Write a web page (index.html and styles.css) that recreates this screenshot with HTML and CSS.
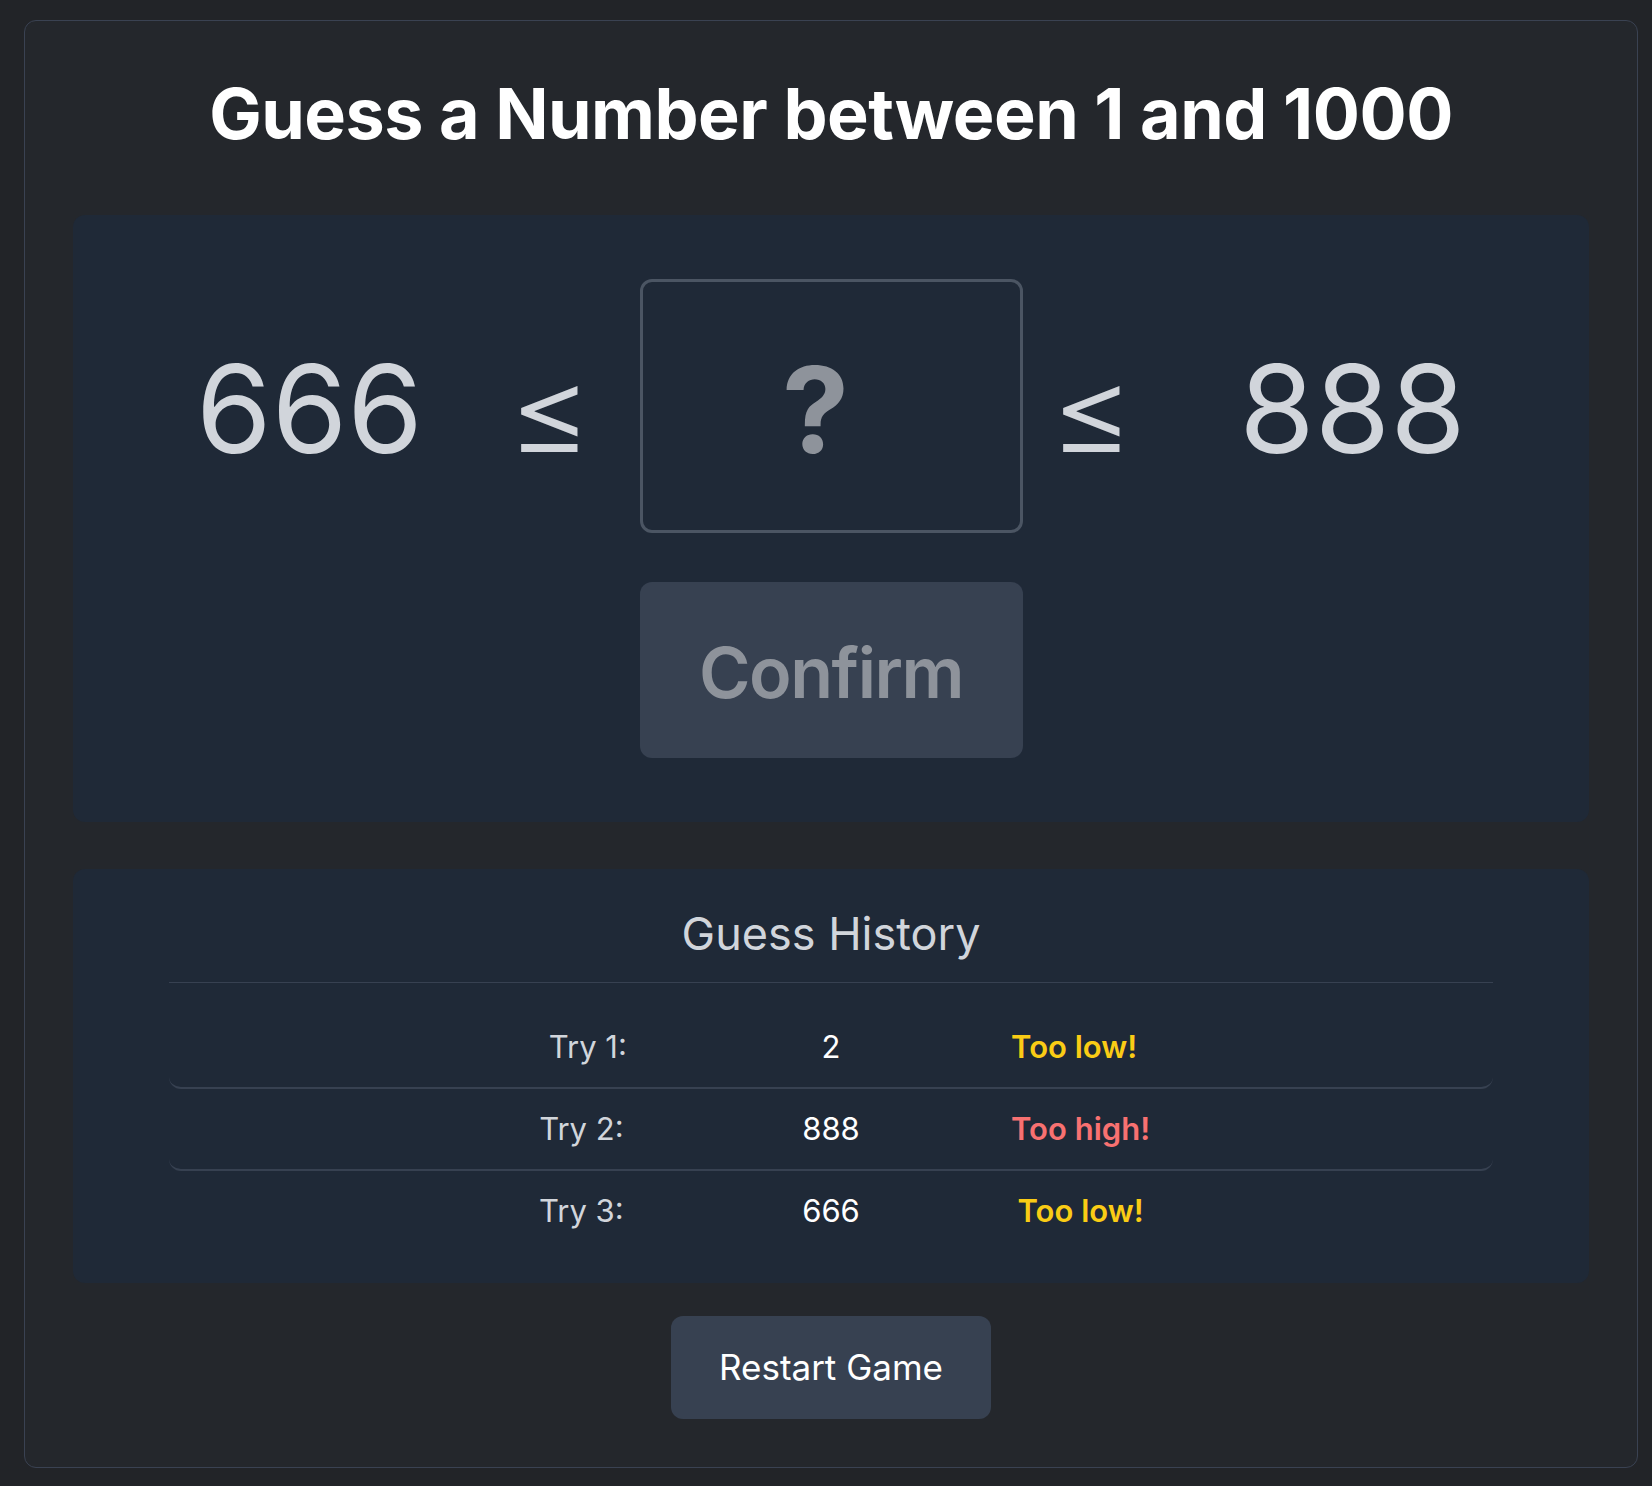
FILE: index.html
```html
<!DOCTYPE html>
<html lang="en">
<head>
<meta charset="utf-8">
<title>Guess a Number</title>
<link rel="stylesheet" href="styles.css">
</head>
<body>
<div class="page">
  <main class="game">
    <h1 class="title">Guess a Number between 1 and 1000</h1>
    <section class="panel play">
      <div class="range">
        <div class="bound">666</div>
        <div class="le">≤</div>
        <input class="guess" type="text" placeholder="?">
        <div class="le">≤</div>
        <div class="bound">888</div>
      </div>
      <button class="confirm" disabled>Confirm</button>
    </section>
    <section class="panel history">
      <h2 class="history-title">Guess History</h2>
      <div class="rows">
        <div class="row">
          <span class="cell label">Try 1:</span>
          <span class="cell value">2</span>
          <span class="cell status low">Too low!</span>
        </div>
        <div class="row">
          <span class="cell label">Try 2:</span>
          <span class="cell value">888</span>
          <span class="cell status high">Too high!</span>
        </div>
        <div class="row">
          <span class="cell label">Try 3:</span>
          <span class="cell value">666</span>
          <span class="cell status low">Too low!</span>
        </div>
      </div>
    </section>
    <button class="restart">Restart Game</button>
  </main>
</div>
</body>
</html>
```

FILE: styles.css
```css
* { box-sizing: border-box; }
html, body {
  margin: 0;
  background: #222428;
}
body {
  font-family: "Inter", "Noto Sans", sans-serif;
  color: #d1d5db;
}
.page {
  padding: 20px 14px 16px 24px;
}
.game {
  background: #24272c;
  border: 1px solid #3a4252;
  border-radius: 12px;
  padding: 48px;
  display: flex;
  flex-direction: column;
  align-items: stretch;
}
.title {
  margin: 0 0 56px;
  text-align: center;
  color: #ffffff;
  font-size: 70px;
  font-weight: 700;
  line-height: 90px;
  letter-spacing: -0.5px;
}
.panel {
  background: #1f2937;
  border-radius: 12px;
}
.play {
  padding: 64px;
  display: flex;
  flex-direction: column;
  align-items: center;
  gap: 49px;
}
.range {
  display: flex;
  align-items: center;
  justify-content: center;
  gap: 32px;
}
.bound {
  width: 342px;
  text-align: center;
  font-size: 122px;
  line-height: 1;
  font-weight: 400;
  color: #d1d5db;
  padding-top: 6px;
}
.le {
  width: 95px;
  text-align: left;
  text-indent: -5px;
  font-size: 128px;
  font-weight: 300;
  line-height: 1;
  color: #d1d5db;
  padding-top: 10px;
}
.guess {
  width: 383px;
  height: 254px;
  border: 3px solid #4b5563;
  border-radius: 12px;
  background: #1f2937;
  padding: 6px 31px 0 0;
  font-family: "Inter", sans-serif;
  font-size: 120px;
  font-weight: 700;
  color: #d1d5db;
  text-align: center;
  outline: none;
}
.guess::placeholder {
  color: #8e939b;
  opacity: 1;
}
.confirm {
  width: 383px;
  height: 176px;
  border: 0;
  border-radius: 12px;
  background: #374151;
  color: #8e939b;
  font-family: "Inter", sans-serif;
  font-size: 70px;
  font-weight: 600;
  letter-spacing: -1.5px;
  padding: 4px 0 0;
}
.history {
  margin-top: 47px;
  padding: 32px 96px;
}
.history-title {
  margin: 0;
  padding-bottom: 15px;
  border-bottom: 1px solid #374151;
  text-align: center;
  font-size: 45px;
  line-height: 66px;
  font-weight: 400;
  color: #d1d5db;
}
.rows {
  margin-top: 24px;
}
.row {
  display: flex;
  padding: 16px 302px;
  border-bottom: 2px solid #374151;
  border-radius: 12px;
  font-size: 31px;
  line-height: 48px;
}
.row:last-child {
  border-bottom: 0;
  padding-bottom: 16px;
}
.cell {
  text-align: center;
  white-space: nowrap;
}
.label {
  flex: 1 1 0;
  color: #d1d5db;
}
.value {
  flex: 1 1 auto;
  color: #ffffff;
}
.status {
  flex: 1 1 0;
  font-weight: 600;
}
.low { color: #facc15; }
.high { color: #f87171; }
.restart {
  align-self: center;
  margin-top: 33px;
  background: #374151;
  color: #ffffff;
  border: 0;
  border-radius: 12px;
  padding: 24px 48px;
  font-family: "Inter", sans-serif;
  font-size: 35px;
  line-height: 55px;
  font-weight: 400;
}
```
